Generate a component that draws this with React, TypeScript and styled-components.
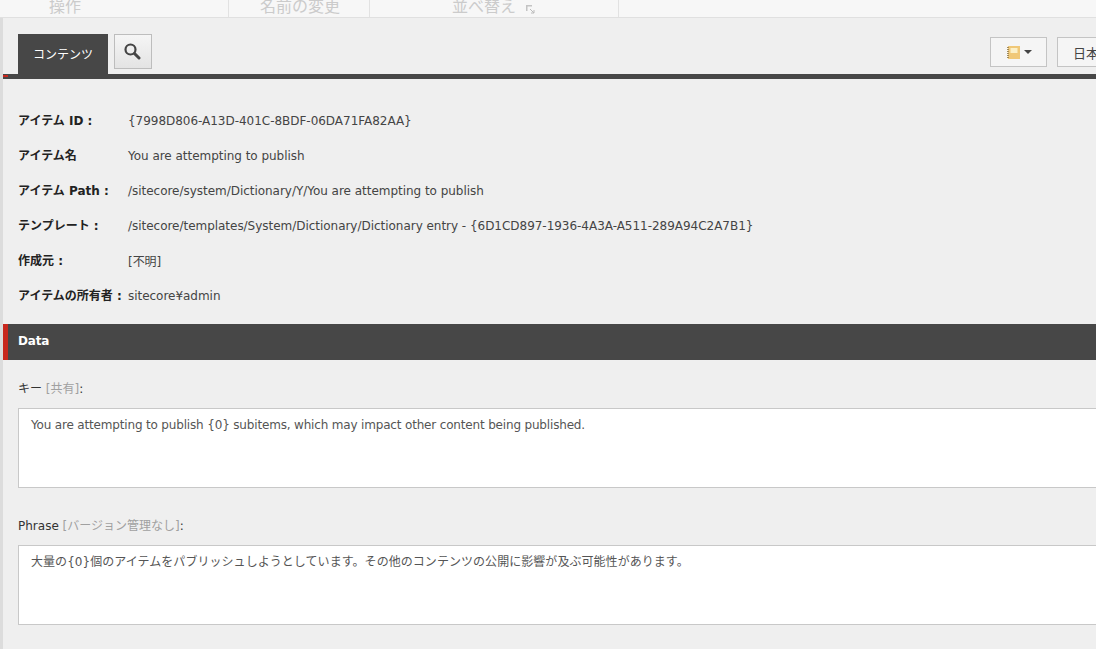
import React from "react";
import styled, { createGlobalStyle } from "styled-components";

const Global = createGlobalStyle`
  html, body { margin: 0; padding: 0; background: #efefef; overflow: hidden; }
  * { box-sizing: border-box; }
  body { font-family: "DejaVu Sans", "Noto Sans CJK JP", sans-serif; font-size: 12px; color: #333; }
`;
const Page = styled.div`
  width: 1096px; height: 649px; overflow: hidden; display: flex; flex-direction: column;
`;
const Ribbon = styled.div`
  height: 18px; flex: none; display: flex; background: #f7f7f7; border-bottom: 1px solid #e0e0e0; overflow: hidden;
`;
const RibbonGroup = styled.div<{ $w: number; $pl: number }>`
  width: ${p => p.$w}px; padding-left: ${p => p.$pl}px; flex: none;
  border-right: 1px solid #e2e2e2; color: #cbcbcb; font-size: 16px; line-height: 16px;
  display: flex; align-items: flex-start; height: 17px; gap: 10px;
  white-space: nowrap;
  & > span { margin-top: -1px; }
`;
const Expand = styled.svg`
  width: 9px; height: 9px; margin-top: 5px; flex: none;
`;
const Body = styled.div`
  flex: 1; display: flex; flex-direction: column; min-height: 0;
  border-left: 3px solid #dcdcdc;
`;
const TabBar = styled.div`
  height: 61px; flex: none; display: flex; align-items: flex-start; padding: 16px 0 0 15px;
  border-bottom: 5px solid #474747; position: relative;
  &::after { content: ""; position: absolute; left: 0; bottom: -3px; width: 5px; height: 2px; background: #c8281e; }
`;
const Tab = styled.div`
  width: 90px; height: 40px; background: #474747; color: #fff; font-size: 12px; padding-bottom: 2px;
  display: flex; align-items: center; justify-content: center;
`;
const IconButton = styled.div`
  width: 38px; height: 35px; margin-left: 6px; border: 1px solid #bdbdbd; padding: 0 2px 2px 0;
  background: linear-gradient(#f5f5f5, #e4e4e4); display: flex; align-items: center; justify-content: center;
`;
const Right = styled.div`
  margin-left: auto; display: flex; gap: 10px; padding-top: 3px; margin-right: -1px;
`;
const ToolButton = styled.div<{ $w: number }>`
  width: ${p => p.$w}px; height: 30px; border: 1px solid #c4c4c4; background: #f5f5f5;
  display: flex; align-items: center; justify-content: ${p => p.$w > 50 ? "center" : "flex-start"}; gap: 4px;
  padding-left: ${p => p.$w > 50 ? 0 : 15}px; font-size: 13px; color: #444; overflow: hidden; white-space: nowrap;
`;
const NotebookIcon = styled.svg`
  margin-left: 2px; flex: none;
`;
const Caret = styled.i`
  width: 0; height: 0; border: 4px solid transparent; border-top: 4px solid #444; border-bottom: 0; display: block;
`;
const Info = styled.div`
  flex: none; padding: 24px 0 0 15px; display: flex; flex-direction: column;
`;
const InfoRow = styled.div`
  height: 35px; display: flex; align-items: center; white-space: nowrap;
`;
const InfoLabel = styled.div`
  width: 110px; flex: none; font-weight: 700; color: #222; font-size: 12px; padding-bottom: 2px;
`;
const InfoValue = styled.div`
  color: #444; letter-spacing: -0.03px;
`;
const Section = styled.div`
  margin-top: 11px; height: 36px; flex: none; background: #474747; border-left: 5px solid #c8281e;
  color: #fff; font-weight: 700; font-size: 12px; display: flex; align-items: center; padding: 0 0 2px 10px; letter-spacing: -0.2px;
`;
const Fields = styled.div`
  padding: 20px 0 0 15px; display: flex; flex-direction: column;
`;
const Field = styled.div`
  display: flex; flex-direction: column; margin-bottom: 29px;
`;
const FieldLabel = styled.div`
  height: 28px; line-height: 18px; color: #333; white-space: nowrap; letter-spacing: 0;
  & > span { color: #a0a0a0; }
`;
const TextBox = styled.div<{ $cjk?: boolean }>`
  width: 1100px; height: 80px; background: #fff; border: 1px solid #c8c8c8; padding: 8px 12px;
  color: #555; line-height: 16px; white-space: nowrap; letter-spacing: ${p => p.$cjk ? 0.05 : -0.17}px;
`;

export default function App() {
  const rows: [string, string][] = [
    ["アイテム ID :", "{7998D806-A13D-401C-8BDF-06DA71FA82AA}"],
    ["アイテム名", "You are attempting to publish"],
    ["アイテム Path :", "/sitecore/system/Dictionary/Y/You are attempting to publish"],
    ["テンプレート :", "/sitecore/templates/System/Dictionary/Dictionary entry - {6D1CD897-1936-4A3A-A511-289A94C2A7B1}"],
    ["作成元 :", "[不明]"],
    ["アイテムの所有者 :", "sitecore¥admin"],
  ];
  return (
    <Page>
      <Global />
      <Ribbon>
        <RibbonGroup $w={229} $pl={49}><span>操作</span></RibbonGroup>
        <RibbonGroup $w={141} $pl={31}><span>名前の変更</span></RibbonGroup>
        <RibbonGroup $w={249} $pl={82}>
          <span>並べ替え</span>
          <Expand viewBox="0 0 9 9"><path d="M0 0h6v1.500H1.500V6H0z" fill="#c4c4c4" /><path d="M4 4l4 4M8 5v3H5" stroke="#bbb" fill="none" /></Expand>
        </RibbonGroup>
      </Ribbon>
      <Body>
        <TabBar>
          <Tab>コンテンツ</Tab>
          <IconButton>
            <svg width="18" height="18" viewBox="0 0 18 18"><circle cx="7.500" cy="7.500" r="5" fill="none" stroke="#444" strokeWidth="2.200" /><path d="M11.500 11.500L16 16" stroke="#444" strokeWidth="3" strokeLinecap="round" /></svg>
          </IconButton>
          <Right>
            <ToolButton $w={57}>
              <NotebookIcon width="13" height="14" viewBox="0 0 13 14"><rect x="1" y="1" width="12" height="13" fill="#f0c878" /><rect x="3.500" y="3" width="7" height="5" fill="#fbf0c8" /><path d="M0 2.500h2M0 4.500h2M0 6.500h2M0 8.500h2M0 10.500h2M0 12.500h2" stroke="#a08a5a" /></NotebookIcon>
              <Caret />
            </ToolButton>
            <ToolButton $w={40}>日本語</ToolButton>
          </Right>
        </TabBar>
        <Info>
          {rows.map(([l, v]) => (
            <InfoRow key={l}><InfoLabel>{l}</InfoLabel><InfoValue>{v}</InfoValue></InfoRow>
          ))}
        </Info>
        <Section>Data</Section>
        <Fields>
          <Field>
            <FieldLabel>キー <span>[共有]</span>:</FieldLabel>
            <TextBox>You are attempting to publish {"{0}"} subitems, which may impact other content being published.</TextBox>
          </Field>
          <Field>
            <FieldLabel>Phrase <span>[バージョン管理なし]</span>:</FieldLabel>
            <TextBox $cjk>大量の{"{0}"}個のアイテムをパブリッシュしようとしています。その他のコンテンツの公開に影響が及ぶ可能性があります。</TextBox>
          </Field>
        </Fields>
      </Body>
    </Page>
  );
}
